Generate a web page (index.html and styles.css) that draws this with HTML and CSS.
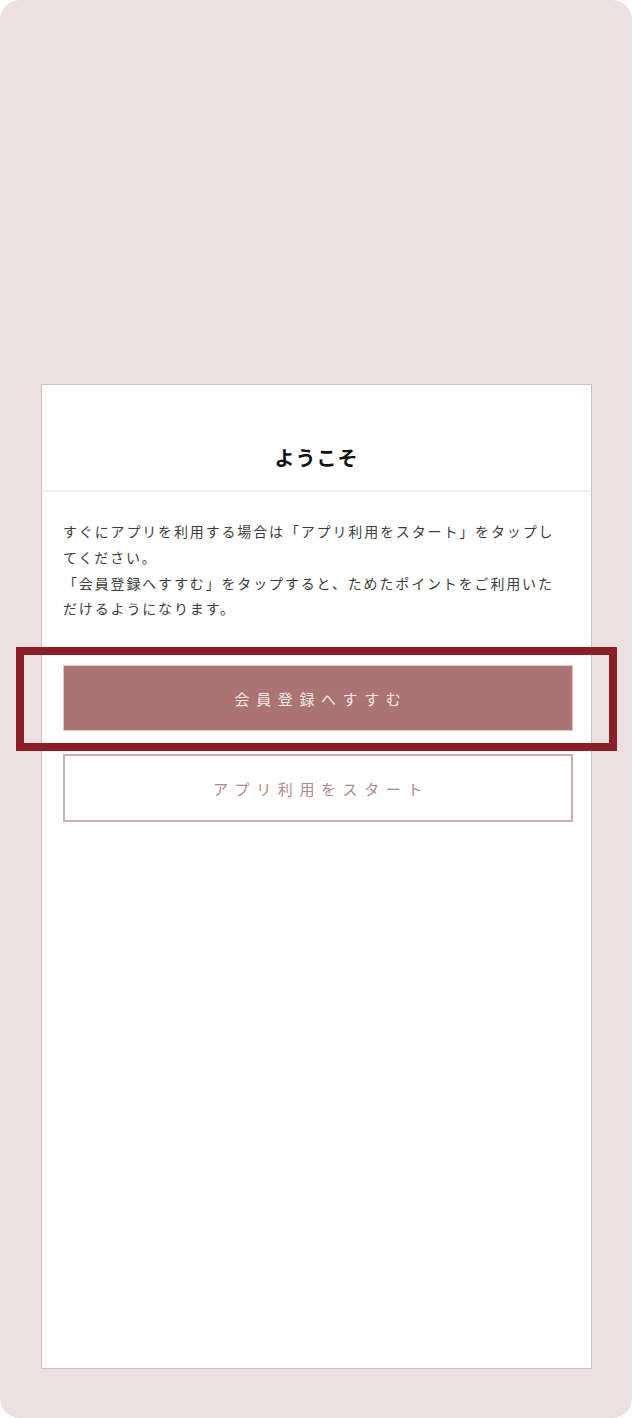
FILE: index.html
```html
<!DOCTYPE html>
<html lang="ja">
<head>
    <meta charset="UTF-8">
    <meta name="viewport" content="width=device-width, initial-scale=1.0">
    <title>ようこそ</title>
    <link rel="stylesheet" href="styles.css">
</head>
<body>
    <div class="frame">
        <div class="card">
            <header class="card-header">
                <h1>ようこそ</h1>
            </header>

            <div class="card-body">
                <p class="message">すぐにアプリを利用する場合は「アプリ利用をスタート」をタップしてください。<br>「会員登録へすすむ」をタップすると、ためたポイントをご利用いただけるようになります。</p>

                <div class="actions">
                    <button class="button primary" type="button">会員登録へすすむ</button>
                    <button class="button outline" type="button">アプリ利用をスタート</button>
                </div>
            </div>
        </div>

        <!-- 説明用のハイライト枠 -->
        <div class="highlight"></div>
    </div>
</body>
</html>
```

FILE: styles.css
```css
body {
    margin: 0;
    background-color: #FFFFFF;
    font-family: "Noto Sans CJK JP", "Noto Sans", sans-serif;
}

.frame {
    position: relative;
    width: 632px;
    height: 1418px;
    box-sizing: border-box;
    padding: 384px 40px 0 41px;
    background-color: #ECE0E1;
    border-radius: 20px;
}

.card {
    height: 985px;
    box-sizing: border-box;
    background-color: #FFFFFF;
    border: 1px solid #D9BBBE;
}

.card-header {
    margin: 0 1px;
    padding: 59px 0 18px;
    border-bottom: 2px solid #EEEEEE;
    text-align: center;
}

.card-header h1 {
    margin: 0;
    font-size: 20px;
    font-weight: 700;
    line-height: 28px;
    letter-spacing: 1px;
    color: #111111;
}

.card-body {
    padding: 27px 18px 0 21px;
}

.message {
    margin: 0;
    padding-right: 10px;
    font-size: 14px;
    line-height: 25.8px;
    letter-spacing: 1.85px;
    color: #3C3C3C;
}

.actions {
    display: flex;
    flex-direction: column;
    gap: 23px;
    margin-top: 43px;
}

.button {
    width: 100%;
    font-family: inherit;
    font-size: 15px;
    letter-spacing: 6.6px;
    text-indent: 6px;
    cursor: pointer;
}

.button.primary {
    height: 66px;
    background-color: #AB7373;
    border: 1px solid #E2CACC;
    color: #F4EAEA;
}

.button.outline {
    height: 68px;
    background-color: #FFFFFF;
    border: 2px solid #D1AEB1;
    color: #B3868A;
}

.highlight {
    position: absolute;
    left: 16px;
    top: 647px;
    width: 601px;
    height: 104px;
    box-sizing: border-box;
    border: 8px solid #8B1F27;
}
```
